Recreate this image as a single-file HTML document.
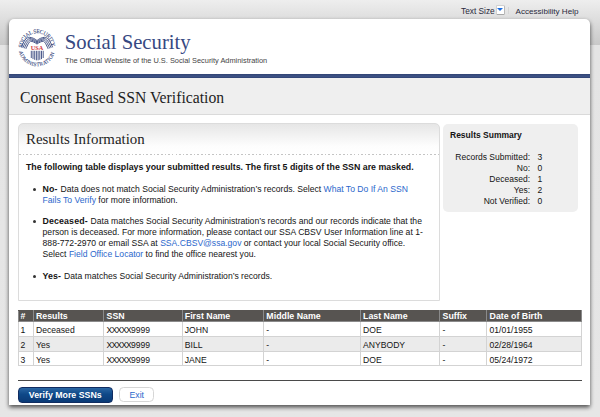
<!DOCTYPE html>
<html><head><meta charset="utf-8">
<style>
*{margin:0;padding:0;box-sizing:border-box}
html,body{width:600px;height:417px;overflow:hidden}
body{position:relative;font-family:"Liberation Sans",sans-serif;color:#141414;
 background:linear-gradient(#eeeeee 0px,#c8c8c8 45.3px,#e4e4e4 45.3px,#e6e6e6 417px)}
.abs{position:absolute;white-space:nowrap}
.top{font-size:8.3px;color:#2a2a3c;top:6.4px;line-height:10px}
#frame{position:absolute;left:9px;top:19px;width:581px;height:386px;background:#fff;
 border-radius:5px 5px 0 0;box-shadow:0 2px 4px rgba(0,0,0,.6),0 3.5px 4px -1px rgba(0,0,0,.16)}
.serif{font-family:"Liberation Serif",serif}
#band{position:absolute;left:9px;top:74.2px;width:581px;height:3.8px;background:linear-gradient(#304373,#3f5488 55%,#2f4272)}
#ph{position:absolute;left:9px;top:78px;width:581px;height:37px;background:#efefef;border-bottom:1px solid #dadada}
#ri{position:absolute;left:18px;top:123px;width:422px;height:178px;border:1px solid #dcdcdc;border-radius:5px 5px 0 0;
 background:linear-gradient(#e6e6e6 0px,#fdfdfd 22px,#fff 30px)}
#dots{position:absolute;left:19px;top:154px;width:420px;height:1px;
 background:repeating-linear-gradient(90deg,#c4c4c4 0 1.6px,transparent 1.6px 3.64px)}
#rs{position:absolute;left:443px;top:124px;width:135.2px;height:88.4px;background:#efefef;border-radius:5px}
.t{font-size:8.6px;line-height:10.8px}
.t b{font-size:8.8px;letter-spacing:.12px;margin-right:.5px}
a,.lnk{color:#2b67cc;text-decoration:none}
.bul{position:absolute;left:33.4px;width:3px;height:3px;background:#333;border-radius:50%;margin-top:-.2px}
table{position:absolute;left:17.5px;top:309.8px;border-collapse:collapse;font-size:8.6px;width:563.7px;table-layout:fixed}
td,th{border:1px solid #d3d3d3;padding:0 0 0 2.1px;text-align:left;white-space:nowrap}
th{background:#575451;color:#fff;font-weight:bold;font-size:8.8px;height:10.6px;line-height:10px;border-color:#8a8a8a;border-top-color:#575451}
td{height:14.9px;line-height:10px;padding-top:3.2px;vertical-align:top}
tr.alt td{background:#ebebeb}
#line{position:absolute;left:18px;top:380px;width:564px;height:1px;background:#4a4a4a}
#btn1{position:absolute;left:17.5px;top:386.5px;width:95.5px;height:16px;border-radius:4px;
 background:linear-gradient(#2a66a3,#0f4888 45%,#0a3a76);color:#fff;font-weight:bold;font-size:8.8px;line-height:14.5px;text-align:center;
 border:.8px solid #102c60}
#btn2{position:absolute;left:118.7px;top:386.6px;width:35.6px;height:15.8px;border-radius:4.5px;border:1px solid #d6d6d6;
 background:#fff;color:#2b67cc;font-size:8.7px;line-height:14.2px;text-align:center;padding-left:.6px}
</style></head>
<body>
<div class="abs top" style="left:461px">Text Size</div>
<div class="abs" style="left:495.5px;top:5.2px;width:9.4px;height:9.6px;background:#fff;border:1px solid #d0d0d0;border-right-color:#b8b8b8;border-bottom-color:#a8a8a8;border-radius:1.5px"></div>
<div class="abs" style="left:497.4px;top:8.2px;width:0;height:0;border-left:3.1px solid transparent;border-right:3.1px solid transparent;border-top:3.3px solid #1f6fe0"></div>
<div class="abs" style="left:508px;top:7px;width:1px;height:7px;background:#d6d6d6"></div>
<div class="abs top" style="left:515.5px;font-size:8.1px;top:6.7px">Accessibility Help</div>

<div id="frame"></div>

<!-- logo -->
<svg class="abs" style="left:14px;top:27px" width="46" height="46" viewBox="0 0 46 46">
 <defs>
  <path id="arcTop" d="M8.40,20.80 A14.6,14.6 0 1 1 37.60,20.80"/>
  <path id="arcBot" d="M5.00,24.63 A18.4,18.4 0 0 0 41.00,24.63"/>
 </defs>
 <text font-family="Liberation Serif" font-size="5.6" fill="#3a4a80" stroke="#3a4a80" stroke-width=".1"><textPath href="#arcTop" textLength="44.4" lengthAdjust="spacing">SOCIAL SECURITY</textPath></text>
 <text font-family="Liberation Serif" font-size="5.3" fill="#3a4a80" stroke="#3a4a80" stroke-width=".1"><textPath href="#arcBot" textLength="48.6" lengthAdjust="spacing">ADMINISTRATION</textPath></text>
 <g fill="none" stroke="#2f3f78" stroke-width=".9">
  <path d="M7.4,20.3 C9.8,13.5 12.8,10.3 15.4,10.3 C18,10.4 21,11.8 23,13.6"/>
  <path d="M8.9,20.8 C11,15 13.6,11.7 15.8,11.6 C18,11.7 21,13 23,14.8"/>
  <path d="M10.4,21.3 C12.3,16.5 14.4,13.1 16.2,12.9 C18.2,13 21,14.2 23,16"/>
  <path d="M11.9,21.8 C13.5,18 15.2,14.5 16.6,14.2 C18.4,14.3 21,15.4 23,17.1"/>
  <path d="M38.6,20.3 C36.2,13.5 33.2,10.3 30.6,10.3 C28.0,10.4 25.0,11.8 23.0,13.6"/>
  <path d="M37.1,20.8 C35.0,15.0 32.4,11.7 30.2,11.6 C28.0,11.7 25.0,13.0 23.0,14.8"/>
  <path d="M35.6,21.3 C33.7,16.5 31.6,13.1 29.8,12.9 C27.8,13.0 25.0,14.2 23.0,16.0"/>
  <path d="M34.1,21.8 C32.5,18.0 30.8,14.5 29.4,14.2 C27.6,14.3 25.0,15.4 23.0,17.1"/>
 </g>
 <text x="23" y="22.8" font-family="Liberation Serif" font-weight="bold" font-size="6.8" fill="#d0393e" text-anchor="middle" textLength="12.6" lengthAdjust="spacingAndGlyphs">USA</text>
 <g stroke="#3a4a80" stroke-width=".9">
  <path d="M17.3,23.8v7.2M19,23.8v8.3M20.7,23.8v9M22.4,23.8v9.5M24.1,23.8v9.5M25.8,23.8v9M27.5,23.8v8.3M29.2,23.8v7.2"/>
 </g>
</svg>

<div class="abs serif" style="left:64.8px;top:29.9px;font-size:20.7px;line-height:24px;color:#364882">Social Security</div>
<div class="abs" style="left:65px;top:56px;font-size:7.4px;line-height:9px;color:#444">The Official Website of the U.S. Social Security Administration</div>

<div id="band"></div>
<div id="ph"></div>
<div class="abs serif" style="left:20px;top:88.8px;font-size:15.7px;line-height:18px;color:#1e1e1e">Consent Based SSN Verification</div>

<div id="ri"></div>
<div id="dots"></div>
<div class="abs serif" style="left:26px;top:130.6px;font-size:14.9px;line-height:17px;color:#1e1e1e">Results Information</div>
<div class="abs t" style="left:26px;top:162px;font-weight:bold;font-size:8.8px">The following table displays your submitted results. The first 5 digits of the SSN are masked.</div>

<div class="bul" style="top:188.4px"></div>
<div class="abs t" style="left:42.6px;top:184.1px"><b>No-</b> Data does not match Social Security Administration’s records. Select <span class="lnk">What To Do If An SSN</span></div>
<div class="abs t" style="left:42.6px;top:195.1px"><span class="lnk">Fails To Verify</span> for more information.</div>

<div class="bul" style="top:220.4px"></div>
<div class="abs t" style="left:42.6px;top:216.1px"><b>Deceased-</b> Data matches Social Security Administration’s records and our records indicate that the</div>
<div class="abs t" style="left:42.6px;top:227.1px">person is deceased. For more information, please contact our SSA CBSV User Information line at 1-</div>
<div class="abs t" style="left:42.6px;top:238.1px">888-772-2970 or email SSA at <span class="lnk">SSA.CBSV@ssa.gov</span> or contact your local Social Security office.</div>
<div class="abs t" style="left:42.6px;top:249.1px">Select <span class="lnk">Field Office Locator</span> to find the office nearest you.</div>

<div class="bul" style="top:275.4px"></div>
<div class="abs t" style="left:42.6px;top:271.1px"><b>Yes-</b> Data matches Social Security Administration’s records.</div>

<div id="rs"></div>
<div class="abs t" style="left:450px;top:130px;font-weight:bold;font-size:8.5px">Results Summary</div>
<div class="abs t" style="left:430px;top:151.7px;width:100px;text-align:right;line-height:11.05px;font-size:8.5px">Records Submitted:<br>No:<br>Deceased:<br>Yes:<br>Not Verified:</div>
<div class="abs t" style="left:537.5px;top:151.7px;line-height:11.05px;font-size:8.5px">3<br>0<br>1<br>2<br>0</div>

<table>
<colgroup><col style="width:15.4px"><col style="width:70.6px"><col style="width:78.2px"><col style="width:81.6px"><col style="width:96.7px"><col style="width:79.5px"><col style="width:47px"><col style="width:94.7px"></colgroup>
<tr><th>#</th><th>Results</th><th>SSN</th><th>First Name</th><th>Middle Name</th><th>Last Name</th><th>Suffix</th><th>Date of Birth</th></tr>
<tr><td>1</td><td>Deceased</td><td><span style="letter-spacing:-.85px">XXXXX</span>9999</td><td>JOHN</td><td>-</td><td>DOE</td><td>-</td><td>01/01/1955</td></tr>
<tr class="alt"><td>2</td><td>Yes</td><td><span style="letter-spacing:-.85px">XXXXX</span>9999</td><td>BILL</td><td>-</td><td>ANYBODY</td><td>-</td><td>02/28/1964</td></tr>
<tr><td>3</td><td>Yes</td><td><span style="letter-spacing:-.85px">XXXXX</span>9999</td><td>JANE</td><td>-</td><td>DOE</td><td>-</td><td>05/24/1972</td></tr>
</table>

<div id="line"></div>
<div id="btn1">Verify More SSNs</div>
<div id="btn2">Exit</div>
</body></html>
